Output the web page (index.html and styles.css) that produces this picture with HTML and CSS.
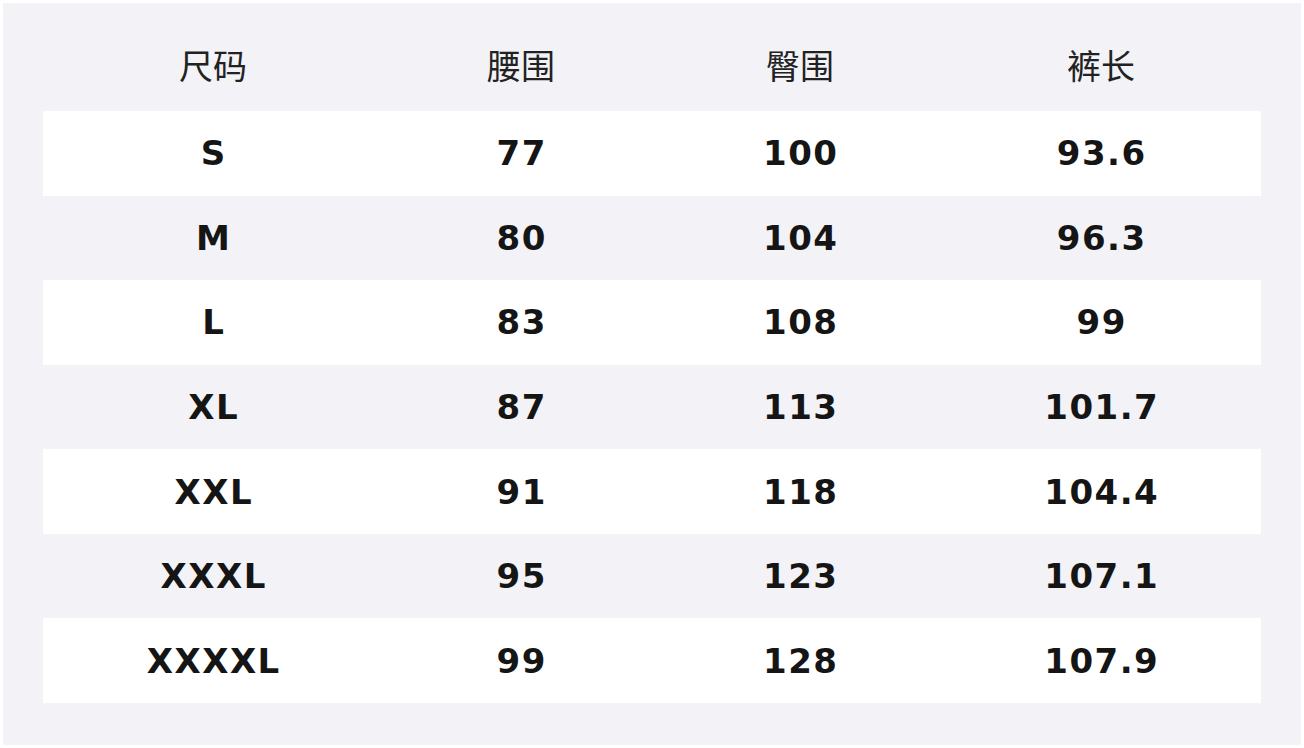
FILE: index.html
```html
<!DOCTYPE html>
<html lang="zh">
<head>
<meta charset="utf-8">
<link rel="stylesheet" href="styles.css">
</head>
<body>
<div class="panel">
  <div class="row head">
    <div class="cell">尺码</div><div class="cell">腰围</div><div class="cell">臀围</div><div class="cell">裤长</div>
  </div>
  <div class="row odd"><div class="cell">S</div><div class="cell">77</div><div class="cell">100</div><div class="cell">93.6</div></div>
  <div class="row"><div class="cell">M</div><div class="cell">80</div><div class="cell">104</div><div class="cell">96.3</div></div>
  <div class="row odd"><div class="cell">L</div><div class="cell">83</div><div class="cell">108</div><div class="cell">99</div></div>
  <div class="row"><div class="cell">XL</div><div class="cell">87</div><div class="cell">113</div><div class="cell">101.7</div></div>
  <div class="row odd"><div class="cell">XXL</div><div class="cell">91</div><div class="cell">118</div><div class="cell">104.4</div></div>
  <div class="row"><div class="cell">XXXL</div><div class="cell">95</div><div class="cell">123</div><div class="cell">107.1</div></div>
  <div class="row odd"><div class="cell">XXXXL</div><div class="cell">99</div><div class="cell">128</div><div class="cell">107.9</div></div>
</div>
</body>
</html>
```
FILE: styles.css
```css
html, body {
  margin: 0;
  padding: 0;
  background: #ffffff;
}
body {
  padding: 3px;
  width: 1298px;
  height: 742px;
}
.panel {
  background: #f2f2f7;
  width: 1298px;
  height: 742px;
  box-sizing: border-box;
  padding: 24px 40px 42px 40px;
  display: flex;
  flex-direction: column;
}
.row {
  display: grid;
  grid-template-columns: 340px 276px 282px 320px;
  height: 84.57px;
  align-items: center;
  font-family: "DejaVu Sans", sans-serif;
  font-weight: bold;
  font-size: 34px;
  letter-spacing: 1.5px;
  color: #151515;
}
.row .cell {
  padding-left: 1.5px;
}
.row.odd {
  background: #ffffff;
}
.row.head {
  height: 84px;
  box-sizing: border-box;
  padding-bottom: 9px;
  font-family: "Noto Sans CJK SC", sans-serif;
  font-weight: normal;
  font-size: 34px;
  letter-spacing: 0;
  color: #222222;
}
.row.head .cell {
  padding-left: 0;
}
.cell {
  text-align: center;
}
```
